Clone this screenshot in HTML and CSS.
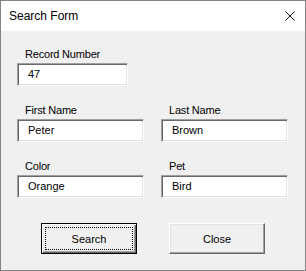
FILE: index.html
```html
<!DOCTYPE html>
<html>
<head>
<meta charset="utf-8">
<link rel="stylesheet" href="styles.css">
</head>
<body>
<div class="window">
  <div class="titlebar">
    <span class="title">Search Form</span>
    <svg class="close" width="10" height="10" viewBox="0 0 10 10"><path d="M0.5 0.5 L9.5 9.5 M9.5 0.5 L0.5 9.5" stroke="#111" stroke-width="1" fill="none"/></svg>
  </div>
  <div class="content">
    <div class="field record">
      <div class="label">Record Number</div>
      <div class="input">47</div>
    </div>
    <div class="grid">
      <div class="field">
        <div class="label">First Name</div>
        <div class="input">Peter</div>
      </div>
      <div class="field">
        <div class="label">Last Name</div>
        <div class="input">Brown</div>
      </div>
      <div class="field">
        <div class="label">Color</div>
        <div class="input">Orange</div>
      </div>
      <div class="field">
        <div class="label">Pet</div>
        <div class="input">Bird</div>
      </div>
    </div>
    <div class="buttons">
      <div class="btn default"><span>Search</span></div>
      <div class="btn"><span>Close</span></div>
    </div>
  </div>
</div>
</body>
</html>
```
FILE: styles.css
```css
* { box-sizing: border-box; }
html, body { margin: 0; padding: 0; background: #f0f0f0; }
.window {
  width: 306px;
  height: 271px;
  border: 1px solid #838383;
  background: #f0f0f0;
  font-family: "Liberation Sans", Arial, sans-serif;
  color: #000;
  display: flex;
  flex-direction: column;
}
.titlebar {
  height: 30px;
  background: #fff;
  display: flex;
  align-items: center;
  padding-left: 8px;
  flex: none;
}
.title { font-size: 12px; line-height: 14px; }
.close { margin-left: auto; margin-right: 10px; display: block; }
.content {
  padding: 17px 0 0 16px;
  display: flex;
  flex-direction: column;
}
.field { display: flex; flex-direction: column; }
.label {
  font-size: 11px;
  line-height: 13px;
  height: 13px;
  padding-left: 8px;
  margin-bottom: 2px;
  letter-spacing: -0.2px;
}
.input {
  height: 23px;
  background: #fff;
  border-style: solid;
  border-width: 1px;
  border-color: #a0a0a0 #fff #fff #a0a0a0;
  box-shadow: inset 1px 1px 0 #696969, inset -1px -1px 0 #e3e3e3;
  font-size: 11px;
  line-height: 21px;
  padding-left: 10px;
}
.record .input { width: 111px; }
.record { margin-bottom: 18px; }
.grid {
  display: grid;
  grid-template-columns: 127px 127px;
  column-gap: 17px;
  row-gap: 18px;
}
.buttons {
  display: flex;
  gap: 32px;
  padding-left: 24px;
  margin-top: 25px;
}
.btn {
  width: 96px;
  height: 31px;
  display: flex;
  align-items: center;
  justify-content: center;
  font-size: 11px;
  background: #f0f0f0;
  border: 1px solid;
  border-color: #fff #696969 #696969 #fff;
  box-shadow: inset -1px -1px 0 #a0a0a0, inset 1px 1px 0 #e3e3e3;
}
.btn.default {
  border-color: #000;
  box-shadow: inset 1px 1px 0 #fff, inset -1px -1px 0 #696969, inset -2px -2px 0 #a0a0a0;
  outline: 1px dotted #000;
  outline-offset: -5px;
}
```
